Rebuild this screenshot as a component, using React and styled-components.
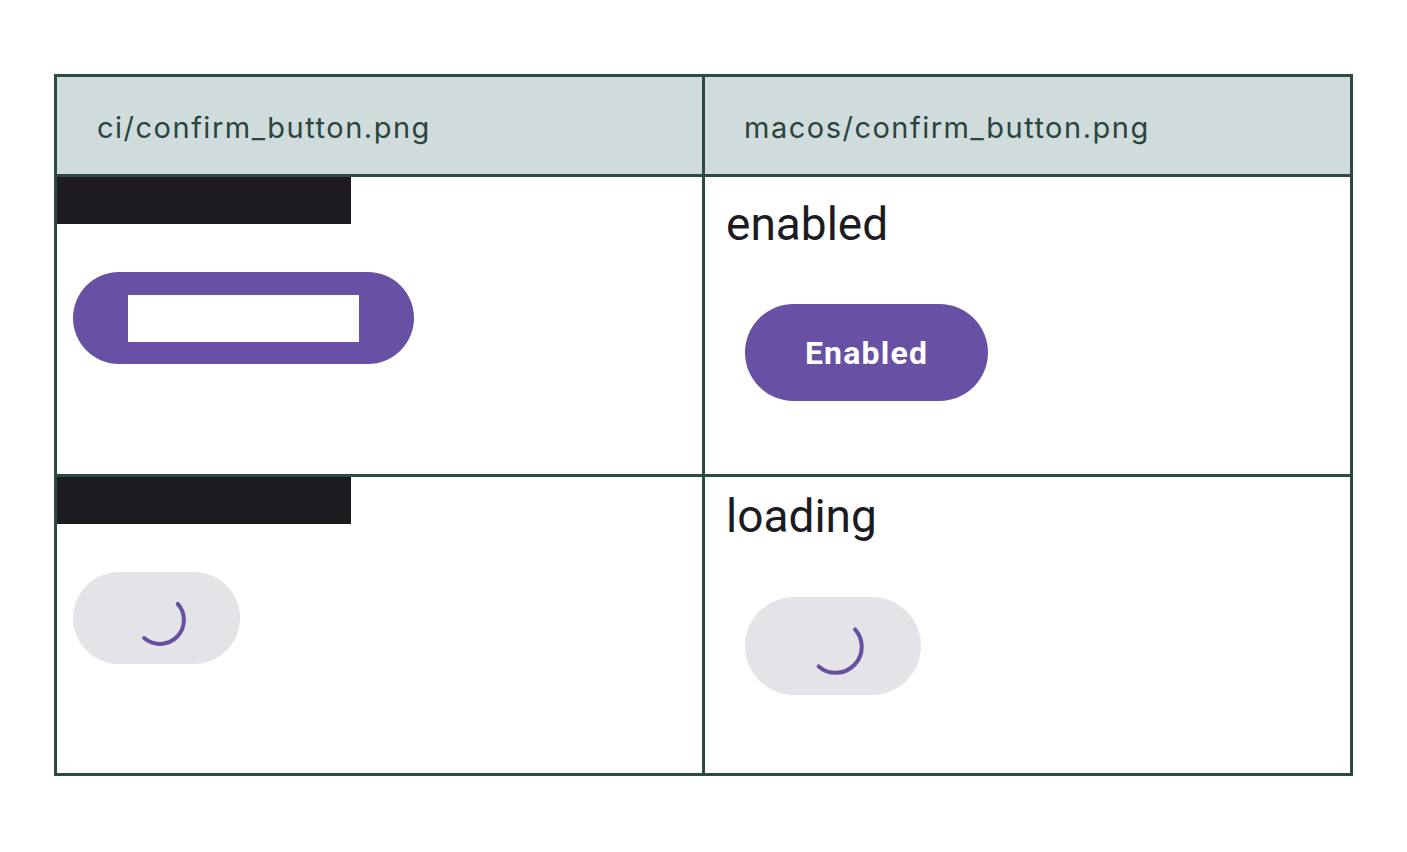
import React from 'react';
import styled, { createGlobalStyle } from 'styled-components';

const GlobalStyle = createGlobalStyle`
  html, body {
    margin: 0;
    padding: 0;
    background: #ffffff;
  }
`;

const Page = styled.div`
  padding: 74px 0 0 54px;
`;

const Grid = styled.div`
  width: 1293px;
  display: grid;
  grid-template-columns: 1fr 1fr;
  grid-template-rows: 97px 297px 296px;
  gap: 3px;
  border: 3px solid #2e4a45;
  background: #2e4a45;
`;

const HeaderCell = styled.div`
  background: #cfdcdb;
  display: flex;
  align-items: center;
  padding: 3px 0 0 ${({ $inset }) => $inset}px;
  font-family: Inter, 'Noto Sans', sans-serif;
  font-size: 29px;
  letter-spacing: 1.5px;
  color: #2a4440;
`;

const CiCell = styled.div`
  background: #ffffff;
  display: flex;
  flex-direction: column;
  align-items: flex-start;
`;

const Redaction = styled.div`
  width: 294px;
  height: 47px;
  background: #1e1b20;
`;

const CiPill = styled.div`
  margin: 48px 0 0 16px;
  width: ${({ $width }) => $width}px;
  height: 92px;
  border-radius: 46px;
  background: ${({ $loading }) => ($loading ? '#e4e3e7' : '#6851a5')};
  display: flex;
  align-items: center;
  justify-content: center;
`;

const Blank = styled.div`
  width: 231px;
  height: 47px;
  background: #ffffff;
`;

const MacCell = styled.div`
  background: #ffffff;
  display: flex;
  flex-direction: column;
  align-items: flex-start;
  padding-left: 21px;
`;

const Label = styled.div`
  margin-top: ${({ $top }) => $top}px;
  font-family: Roboto, 'Noto Sans', sans-serif;
  font-size: 46px;
  line-height: 1;
  color: #1c1b1f;
`;

const MacPill = styled.div`
  margin: ${({ $gap }) => $gap}px 0 0 19px;
  width: ${({ $width }) => $width}px;
  height: ${({ $height }) => $height}px;
  border-radius: 49px;
  background: ${({ $loading }) => ($loading ? '#e4e3e7' : '#6851a5')};
  display: flex;
  align-items: center;
  justify-content: center;
  font-family: Roboto, 'Noto Sans', sans-serif;
  font-weight: 700;
  font-size: 32px;
  letter-spacing: 1.2px;
  color: #ffffff;
`;

function Spinner({ size, radius, dx, dy }) {
  const c = size / 2;
  const a0 = (-49 * Math.PI) / 180;
  const a1 = (138 * Math.PI) / 180;
  const x0 = c + dx + radius * Math.cos(a0);
  const y0 = c + dy + radius * Math.sin(a0);
  const x1 = c + dx + radius * Math.cos(a1);
  const y1 = c + dy + radius * Math.sin(a1);
  return (
    <svg width={size} height={size} viewBox={`0 0 ${size} ${size}`}>
      <path
        d={`M ${x0} ${y0} A ${radius} ${radius} 0 0 1 ${x1} ${y1}`}
        fill="none"
        stroke="#6750a4"
        strokeWidth="4"
        strokeLinecap="round"
      />
    </svg>
  );
}

export default function App() {
  return (
    <>
      <GlobalStyle />
      <Page>
        <Grid>
          <HeaderCell $inset={40}>ci/confirm_button.png</HeaderCell>
          <HeaderCell $inset={39}>macos/confirm_button.png</HeaderCell>

          <CiCell>
            <Redaction />
            <CiPill $width={341}>
              <Blank />
            </CiPill>
          </CiCell>
          <MacCell>
            <Label $top={24}>enabled</Label>
            <MacPill $width={243} $height={97} $gap={57}>
              Enabled
            </MacPill>
          </MacCell>

          <CiCell>
            <Redaction />
            <CiPill $width={167} $loading>
              <Spinner size={64} radius={24} dx={5} dy={4} />
            </CiPill>
          </CiCell>
          <MacCell>
            <Label $top={16}>loading</Label>
            <MacPill $width={176} $height={98} $gap={58} $loading>
              <Spinner size={68} radius={26} dx={5} dy={3} />
            </MacPill>
          </MacCell>
        </Grid>
      </Page>
    </>
  );
}
